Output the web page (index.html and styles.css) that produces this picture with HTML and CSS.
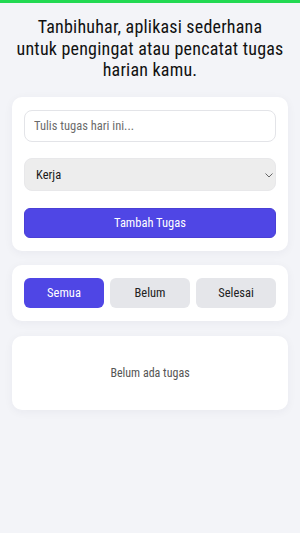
FILE: index.html
```html
<!DOCTYPE html>
<html lang="id">
<head>
    <meta charset="UTF-8">
    <meta name="viewport" content="width=device-width, initial-scale=1.0">
    <title>Tanbihuhar</title>
    <link rel="stylesheet" href="styles.css">
</head>
<body>
    <div class="top-bar"></div>
    <div class="container">
        <h1 class="title">Tanbihuhar, aplikasi sederhana<br>untuk pengingat atau pencatat tugas<br>harian kamu.</h1>

        <div class="card form-card">
            <input type="text" class="task-input" placeholder="Tulis tugas hari ini...">
            <div class="select-wrap">
                <select class="task-category">
                    <option>Kerja</option>
                    <option>Pribadi</option>
                    <option>Belajar</option>
                </select>
                <svg class="chevron" width="8" height="5" viewBox="0 0 8 5">
                    <path d="M0.5 0.5 L4 4 L7.5 0.5" fill="none" stroke="#666" stroke-width="1"/>
                </svg>
            </div>
            <button class="add-btn">Tambah Tugas</button>
        </div>

        <div class="card filter-card">
            <button class="filter-btn active">Semua</button>
            <button class="filter-btn">Belum</button>
            <button class="filter-btn">Selesai</button>
        </div>

        <div class="card list-card">
            <p class="empty">Belum ada tugas</p>
        </div>
    </div>
</body>
</html>
```

FILE: styles.css
```css
body {
    margin: 0;
    background: #f3f4f8;
    font-family: 'Roboto', 'Noto Sans', sans-serif;
    font-stretch: 85%;
    color: #111;
}

.top-bar {
    height: 3px;
    background: #22d952;
}

.container {
    padding: 13px 12px 20px;
    display: flex;
    flex-direction: column;
    gap: 14px;
}

.title {
    margin: 0 0 2px;
    font-size: 18px;
    font-weight: 400;
    line-height: 21.5px;
    letter-spacing: 0.2px;
    text-align: center;
    color: #111;
}

.card {
    background: #fff;
    border-radius: 10px;
    padding: 13px 12px;
    box-shadow: 0 2px 10px rgba(30, 40, 80, 0.05);
}

.form-card {
    display: flex;
    flex-direction: column;
    gap: 16px;
}

.task-input, .task-category, .add-btn {
    box-sizing: border-box;
    width: 100%;
    font-family: inherit;
    font-stretch: inherit;
    font-size: 12.5px;
    border-radius: 8px;
}

.task-input {
    height: 32px;
    padding: 0 9px;
    border: 1px solid #e3e4e8;
    background: #fff;
    color: #222;
    outline: none;
}

.task-input::placeholder {
    color: #6b6b6b;
}

.select-wrap {
    position: relative;
}

.task-category {
    display: block;
    height: 33px;
    padding: 0 11px;
    border: 1px solid #e8e8ea;
    background: #ededed;
    color: #1a1a1a;
    appearance: none;
    -webkit-appearance: none;
}

.chevron {
    position: absolute;
    right: 3px;
    top: 15px;
    pointer-events: none;
}

.add-btn {
    height: 30px;
    margin-top: 1px;
    border: 1px solid #4a3fd6;
    border-radius: 6px;
    background: #4f46e5;
    color: #fff;
    cursor: pointer;
}

.filter-card {
    display: grid;
    grid-template-columns: 1fr 1fr 1fr;
    gap: 6px;
}

.filter-btn {
    height: 30px;
    border: none;
    border-radius: 6px;
    background: #e5e6ea;
    color: #222;
    font-family: inherit;
    font-stretch: inherit;
    font-size: 12.5px;
    cursor: pointer;
}

.filter-btn.active {
    background: #4f46e5;
    color: #fff;
}

.list-card {
    height: 48px;
    margin-top: 1px;
    display: flex;
    align-items: center;
    justify-content: center;
}

.empty {
    margin: 0;
    font-size: 12px;
    color: #555;
}
```
